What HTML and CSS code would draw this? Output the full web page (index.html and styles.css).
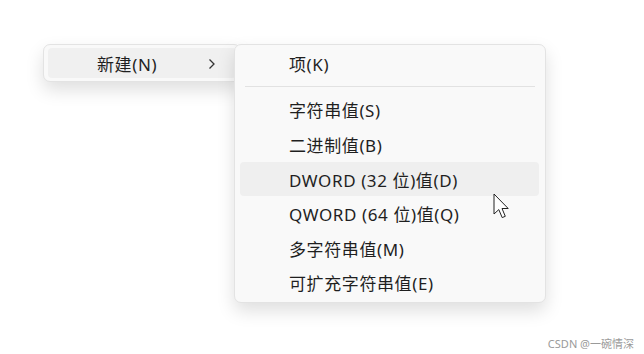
FILE: index.html
```html
<!DOCTYPE html>
<html lang="zh-CN">
<head>
    <meta charset="UTF-8">
    <title>新建</title>
    <link rel="stylesheet" href="styles.css">
</head>
<body>
    <div class="stage">
        <div class="menu main-menu">
            <div class="item active">
                <span class="label">新建(N)</span>
                <svg class="chevron" width="8" height="12" viewBox="0 0 8 12">
                    <path d="M1.5 1.5 L6 6 L1.5 10.5" fill="none" stroke="#333" stroke-width="1.3"/>
                </svg>
            </div>
        </div>

        <div class="menu sub-menu">
            <div class="item">项(K)</div>
            <div class="separator"></div>
            <div class="item">字符串值(S)</div>
            <div class="item">二进制值(B)</div>
            <div class="item hover">DWORD (32 位)值(D)</div>
            <div class="item">QWORD (64 位)值(Q)</div>
            <div class="item">多字符串值(M)</div>
            <div class="item">可扩充字符串值(E)</div>
        </div>
    </div>

    <svg class="cursor" width="18" height="28" viewBox="0 0 18 28">
        <path d="M1 1 V21 L5.8 16.6 L9.2 24.6 L12.3 23.3 L9 15.5 H15.2 Z" fill="#fff" stroke="#222" stroke-width="1" stroke-linejoin="round"/>
    </svg>

    <div class="watermark">CSDN @一碗情深</div>
</body>
</html>
```

FILE: styles.css
```css
body {
    margin: 0;
    background-color: #ffffff;
    font-family: "Noto Sans", "Noto Sans CJK SC", sans-serif;
    color: #1f1f1f;
    width: 644px;
    height: 354px;
    overflow: hidden;
}

.stage {
    display: flex;
    align-items: flex-start;
    padding: 44px 0 0 43px;
}

.menu {
    background-color: #f9f9f9;
    border: 1px solid #e3e3e3;
    border-radius: 7px;
    box-shadow: 0 8px 18px rgba(0, 0, 0, 0.13);
    box-sizing: border-box;
}

.main-menu {
    width: 198px;
    height: 38px;
    padding: 3px 4px;
}

.sub-menu {
    width: 312px;
    height: 259px;
    margin-left: -7px;
    padding: 1px 6px 4px 5px;
    z-index: 1;
}

.item {
    height: 34.6px;
    display: flex;
    align-items: center;
    padding-left: 49px;
    font-size: 17px;
    letter-spacing: 0.6px;
    border-radius: 4px;
    white-space: nowrap;
}

.main-menu .item {
    height: 30px;
}

.item.active {
    background-color: #f0f0f0;
}

.item.hover {
    background-color: #efefef;
}

.label {
    width: 111px;
}

.chevron {
    margin-top: 1px;
}

.separator {
    height: 1px;
    background-color: #e2e2e2;
    margin: 5px 4px 6px 5px;
}

.cursor {
    position: absolute;
    left: 493px;
    top: 193px;
    z-index: 2;
}

.watermark {
    position: absolute;
    right: 10px;
    bottom: 3px;
    font-size: 11px;
    color: #9a9a9a;
}
```
